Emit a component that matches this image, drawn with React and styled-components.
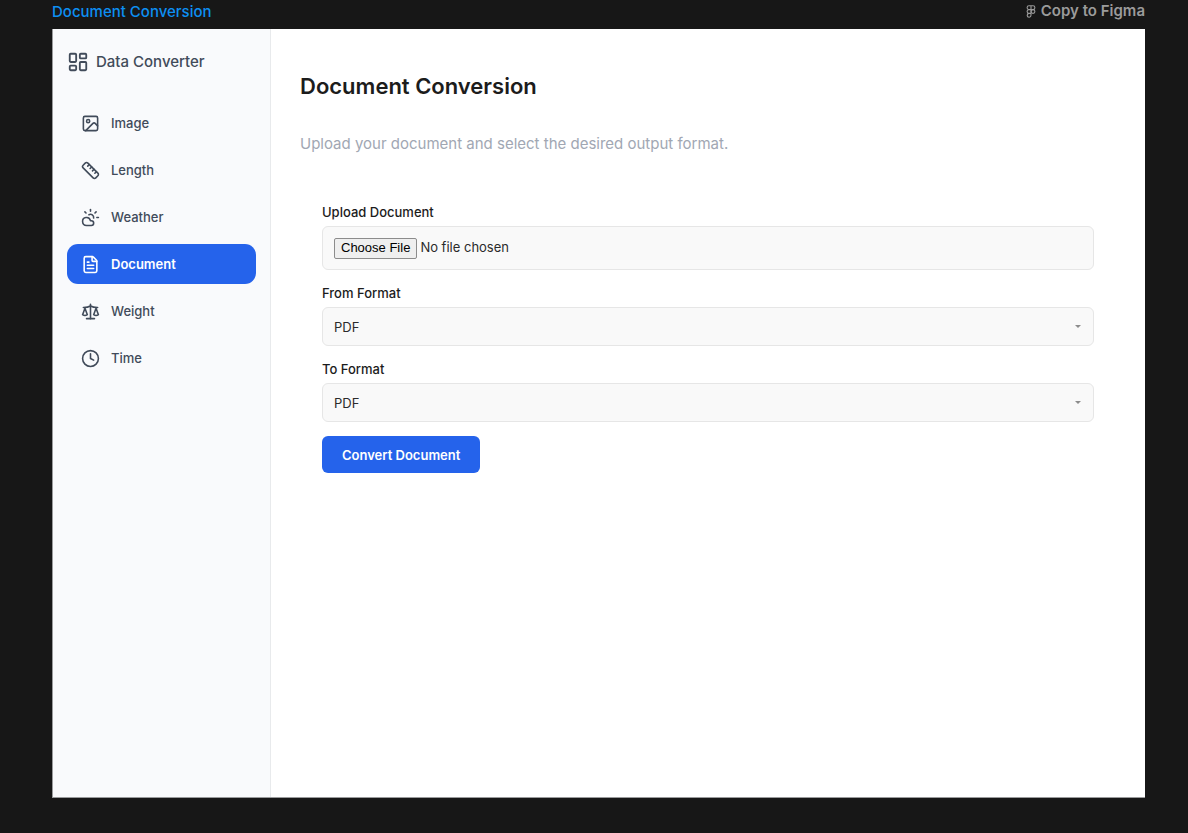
import React from "react";
import styled, { createGlobalStyle } from "styled-components";
import {
  LayoutDashboard,
  Image,
  Ruler,
  CloudSun,
  FileText,
  Scale,
  Clock,
} from "lucide-react";

const GlobalStyle = createGlobalStyle`
  *, *::before, *::after { box-sizing: border-box; }
  body {
    margin: 0;
    background: #171717;
    color: #1c1c1c;
    font-family: Inter, "Liberation Sans", sans-serif;
    font-size: 13px;
    line-height: 20px;
  }
  h1, p { margin: 0; }
`;

const Page = styled.div`
  min-height: 100vh;
  display: flex;
  flex-direction: column;
  padding: 0 43px 35px 52px;
`;

const TopBar = styled.header`
  display: flex;
  justify-content: space-between;
  height: 29px;
  font-size: 15px;
  line-height: 24px;
`;

const FrameLink = styled.a`
  color: #0d8ff2;
  font-weight: 500;
  text-decoration: none;
`;

const CopyButton = styled.button`
  display: flex;
  align-items: center;
  gap: 5px;
  height: 22px;
  padding: 0;
  border: 0;
  background: none;
  color: #9b9b9b;
  font: 600 15px/22px Inter, "Liberation Sans", sans-serif;
`;

const Frame = styled.div`
  flex: 1;
  display: flex;
  background: #fff;
  border-left: 1px solid #9a9b9c;
  border-bottom: 1px solid #9a9b9c;
`;

const Sidebar = styled.aside`
  flex: 0 0 218px;
  padding: 22px 14px;
  background: #f9fafc;
  border-right: 1px solid #e8eaec;
`;

const Brand = styled.div`
  display: flex;
  align-items: center;
  gap: 7px;
  height: 22px;
  color: #414b5a;
  font-size: 15px;
  font-weight: 500;
`;

const Nav = styled.nav`
  display: flex;
  flex-direction: column;
  gap: 7px;
  margin-top: 30px;
`;

const NavItem = styled.a`
  display: flex;
  align-items: center;
  gap: 11px;
  height: 40px;
  padding: 0 14px;
  border-radius: 11px;
  background: ${(p) => (p.$active ? "#2563eb" : "transparent")};
  color: ${(p) => (p.$active ? "#fff" : "#414b5a")};
  font-weight: ${(p) => (p.$active ? 600 : 500)};
  text-decoration: none;
`;

const Main = styled.main`
  flex: 1;
  min-width: 0;
  padding: 42px 29px;
`;

const Title = styled.h1`
  font-size: 22px;
  font-weight: 600;
  line-height: 30px;
`;

const Intro = styled.p`
  margin-top: 32px;
  color: #a1a7b3;
  font-size: 15px;
  line-height: 22px;
`;

const Form = styled.form`
  display: flex;
  flex-direction: column;
  align-items: flex-start;
  gap: 14px;
  padding: 48px 22px;
`;

const Field = styled.div`
  display: flex;
  flex-direction: column;
  gap: 5px;
  width: 100%;
`;

const Label = styled.label`
  font-weight: 500;
  line-height: 18px;
`;

const FileInput = styled.input`
  width: 100%;
  height: 44px;
  padding: 10px 11px;
  border: 1px solid #e6e6e6;
  border-radius: 6px;
  background: #f9f9f9;
  color: #2b2b2b;
  font: 400 13px/20px Inter, "Liberation Sans", sans-serif;

  &::file-selector-button {
    height: 21px;
    margin: 0 3px 0 0;
    padding: 0 6px;
    border: 1px solid #8c8c8c;
    border-radius: 2px;
    background: #efefef;
    color: #000;
    font: 400 13px/18px "Liberation Sans", Arial, sans-serif;
  }
`;

const SelectBox = styled.div`
  display: grid;
  align-items: center;

  > * { grid-area: 1 / 1; }
  > svg {
    justify-self: end;
    margin-right: 13px;
    pointer-events: none;
  }
`;

const Select = styled.select`
  appearance: none;
  width: 100%;
  height: 39px;
  padding: 0 11px;
  border: 1px solid #e6e6e6;
  border-radius: 6px;
  background: #f9f9f9;
  color: #2b2b2b;
  font: 400 13px/20px Inter, "Liberation Sans", sans-serif;
`;

const SubmitButton = styled.button`
  height: 37px;
  padding: 0 20px;
  border: 0;
  border-radius: 6px;
  background: #2563eb;
  color: #fff;
  font: 600 13px/20px Inter, "Liberation Sans", sans-serif;
`;

const navItems = [
  { label: "Image", Icon: Image },
  { label: "Length", Icon: Ruler },
  { label: "Weather", Icon: CloudSun },
  { label: "Document", Icon: FileText, active: true },
  { label: "Weight", Icon: Scale },
  { label: "Time", Icon: Clock },
];

function FigmaMark() {
  return (
    <svg width="10" height="13" viewBox="0 0 10 13" fill="none" stroke="currentColor" strokeWidth="1.1" aria-hidden="true">
      <path d="M5 .8H3a1.9 1.9 0 0 0 0 3.8h2zM5 .8h2a1.9 1.9 0 0 1 0 3.8H5zM5 4.6H3a1.9 1.9 0 0 0 0 3.8h2zM5 8.4H3a1.9 1.9 0 1 0 2 1.9z" />
      <circle cx="7" cy="6.5" r="1.9" />
    </svg>
  );
}

function FormatField({ id, label }) {
  return (
    <Field>
      <Label htmlFor={id}>{label}</Label>
      <SelectBox>
        <Select id={id} defaultValue="PDF">
          <option>PDF</option>
        </Select>
        <svg width="6" height="3" viewBox="0 0 6 3" aria-hidden="true">
          <path d="M0 0h6L3 3z" fill="#8c8c8c" />
        </svg>
      </SelectBox>
    </Field>
  );
}

export default function App() {
  return (
    <>
      <GlobalStyle />
      <Page>
        <TopBar>
          <FrameLink href="#frame">Document Conversion</FrameLink>
          <CopyButton type="button">
            <FigmaMark />
            Copy to Figma
          </CopyButton>
        </TopBar>
        <Frame id="frame">
          <Sidebar>
            <Brand>
              <LayoutDashboard size={22} />
              Data Converter
            </Brand>
            <Nav>
              {navItems.map(({ label, Icon, active }) => (
                <NavItem
                  key={label}
                  href={`#${label.toLowerCase()}`}
                  $active={active}
                  aria-current={active ? "page" : undefined}
                >
                  <Icon size={19} />
                  {label}
                </NavItem>
              ))}
            </Nav>
          </Sidebar>
          <Main>
            <Title>Document Conversion</Title>
            <Intro>Upload your document and select the desired output format.</Intro>
            <Form>
              <Field>
                <Label htmlFor="upload">Upload Document</Label>
                <FileInput id="upload" type="file" />
              </Field>
              <FormatField id="from-format" label="From Format" />
              <FormatField id="to-format" label="To Format" />
              <SubmitButton type="button">Convert Document</SubmitButton>
            </Form>
          </Main>
        </Frame>
      </Page>
    </>
  );
}
